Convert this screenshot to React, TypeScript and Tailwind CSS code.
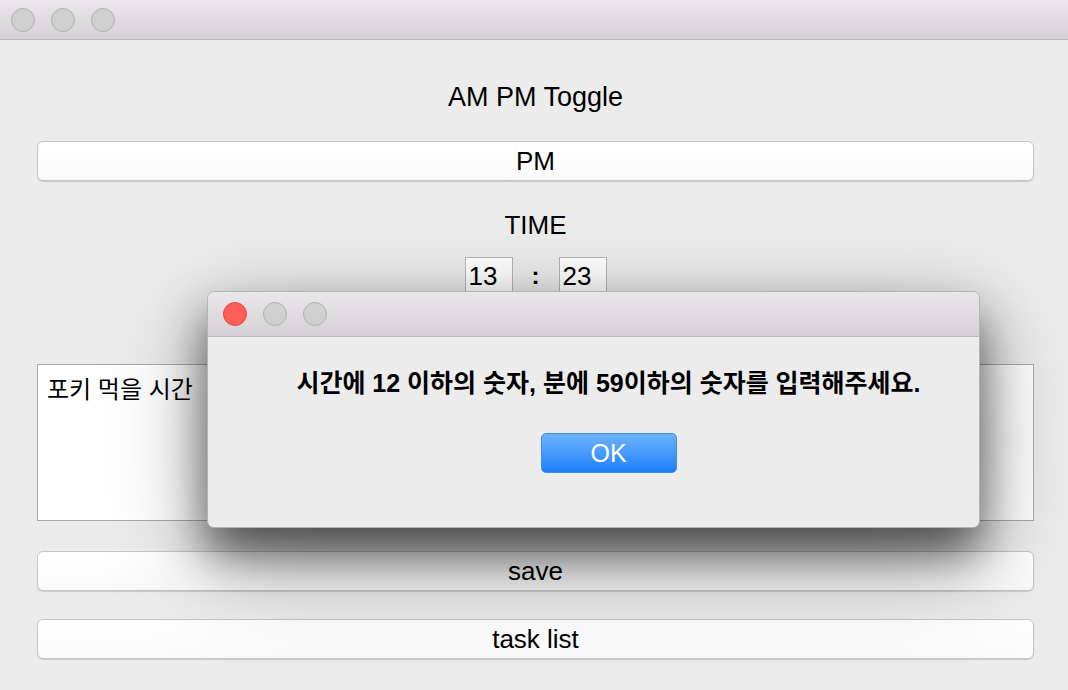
import React from "react";

const font = { fontFamily: '"Liberation Sans", "Noto Sans CJK KR", sans-serif' };

function Light({ color }: { color?: string }) {
  return (
    <div
      className={`w-[24px] h-[24px] rounded-full border ${
        color === "red" ? "bg-[#fe5f57] border-[#e2463f]" : "bg-[#d1d0d1] border-[#b3b2b3]"
      }`}
    />
  );
}

function MacButton({ label }: { label: string }) {
  return (
    <button className="w-full h-[40px] rounded-[6px] border border-[#c6c6c6] bg-gradient-to-b from-white to-[#fafafa] shadow-[0_1px_1px_rgba(0,0,0,0.15)] text-[26px] leading-[38px] text-black">
      {label}
    </button>
  );
}

export default function App() {
  return (
    <div
      className="relative w-[1068px] h-[690px] overflow-hidden bg-[#ececec] text-black"
      style={font}
    >
      {/* TITLE BAR */}
      <div className="h-[40px] flex items-center gap-[16px] px-[11px] bg-gradient-to-b from-[#e9e7e9] to-[#d4d2d4] border-b border-[#b9b9b9]">
        <Light />
        <Light />
        <Light />
      </div>

      {/* CONTENT */}
      <div className="flex flex-col items-center px-[37px] pr-[34px]">
        <div className="mt-[41px] h-[32px] leading-[32px] text-[27px]">AM PM Toggle</div>
        <div className="mt-[28px] w-full">
          <MacButton label="PM" />
        </div>
        <div className="mt-[28px] h-[32px] leading-[32px] text-[26px]">TIME</div>
        <div className="mt-[16px] flex items-center gap-[16px]">
          <div className="w-[48px] h-[38px] bg-white border border-[#b5b5b5] pl-[3px] pt-[2px] text-[26px] leading-[32px]">
            13
          </div>
          <div className="text-[24px] w-[14px] text-center font-bold">:</div>
          <div className="w-[48px] h-[38px] bg-white border border-[#b5b5b5] pl-[3px] pt-[2px] text-[26px] leading-[32px]">
            23
          </div>
        </div>
        <div className="mt-[69px] w-full h-[157px] bg-white border border-[#ababab] px-[9px] py-[9px] text-[24px] leading-[32px]">
          포키 먹을 시간
        </div>
        <div className="mt-[30px] w-full">
          <MacButton label="save" />
        </div>
        <div className="mt-[28px] w-full">
          <MacButton label="task list" />
        </div>
      </div>

      {/* ALERT DIALOG */}
      <div className="absolute left-[207px] top-[291px] w-[773px] h-[237px] rounded-[7px] bg-[#ececec] border border-[#b4b4b4] overflow-hidden shadow-[0_26px_45px_rgba(0,0,0,0.55),0_30px_100px_rgba(0,0,0,0.35)]">
        <div className="h-[45px] flex items-center gap-[16px] px-[15px] bg-gradient-to-b from-[#e9e7e9] to-[#d4d2d4] border-b border-[#bcbcbc]">
          <Light color="red" />
          <Light />
          <Light />
        </div>
        <div className="flex flex-col items-center pl-[30px]">
          <div className="mt-[30px] text-[25px] font-bold leading-[32px] whitespace-nowrap">
            시간에 12 이하의 숫자, 분에 59이하의 숫자를 입력해주세요.
          </div>
          <button className="mt-[34px] w-[136px] h-[40px] rounded-[5px] bg-gradient-to-b from-[#6cb3fa] to-[#1a7efb] border border-[#3b8ee8] text-white text-[25px] leading-[38px]">
            OK
          </button>
        </div>
      </div>
    </div>
  );
}
